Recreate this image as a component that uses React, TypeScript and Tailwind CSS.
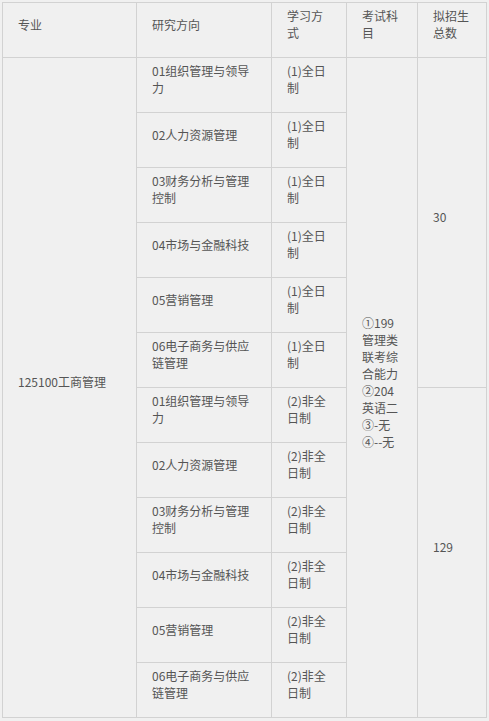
const directions = [
  '01组织管理与领导力',
  '02人力资源管理',
  '03财务分析与管理控制',
  '04市场与金融科技',
  '05营销管理',
  '06电子商务与供应链管理',
]

const fullTime = directions.map((d) => ({ dir: d, mode: '(1)全日制' }))
const partTime = directions.map((d) => ({ dir: d, mode: '(2)非全日制' }))

const cell = 'flex items-center border-r border-b border-[#d2d2d2] px-[15px] pt-[2px] pb-[14px]'

export default function App() {
  return (
    <div
      className="min-h-[721px] w-[489px] bg-[#f0f0f0] pl-[2px] pt-[2px] text-[12px] leading-[17px] text-[#555]"
      style={{ fontFamily: '"Noto Sans CJK SC", "Noto Sans", sans-serif' }}
    >
      <div className="grid w-[485px] grid-cols-[134px_135px_75px_71px_69px] auto-rows-[55px] border-l border-t border-[#d2d2d2]">
        <div className={cell}>专业</div>
        <div className={cell}>研究方向</div>
        <div className={cell}>学习方式</div>
        <div className={cell}>考试科目</div>
        <div className={cell}>拟招生总数</div>

        {[...fullTime, ...partTime].map((row, i) => (
          <Row key={i} index={i} dir={row.dir} mode={row.mode} />
        ))}
      </div>
    </div>
  )
}

function Row({ index, dir, mode }: { index: number; dir: string; mode: string }) {
  return (
    <>
      {index === 0 ? <div className={`${cell} row-span-12`}>125100工商管理</div> : null}
      <div className={cell}>{dir}</div>
      <div className={cell}>{mode}</div>
      {index === 0 ? (
        <div className={`${cell} row-span-12`}>
          ①199管理类联考综合能力
          <br />
          ②204英语二
          <br />
          ③-无
          <br />
          ④--无
        </div>
      ) : null}
      {index === 0 ? <div className={`${cell} row-span-6`}>30</div> : null}
      {index === 6 ? <div className={`${cell} row-span-6`}>129</div> : null}
    </>
  )
}
